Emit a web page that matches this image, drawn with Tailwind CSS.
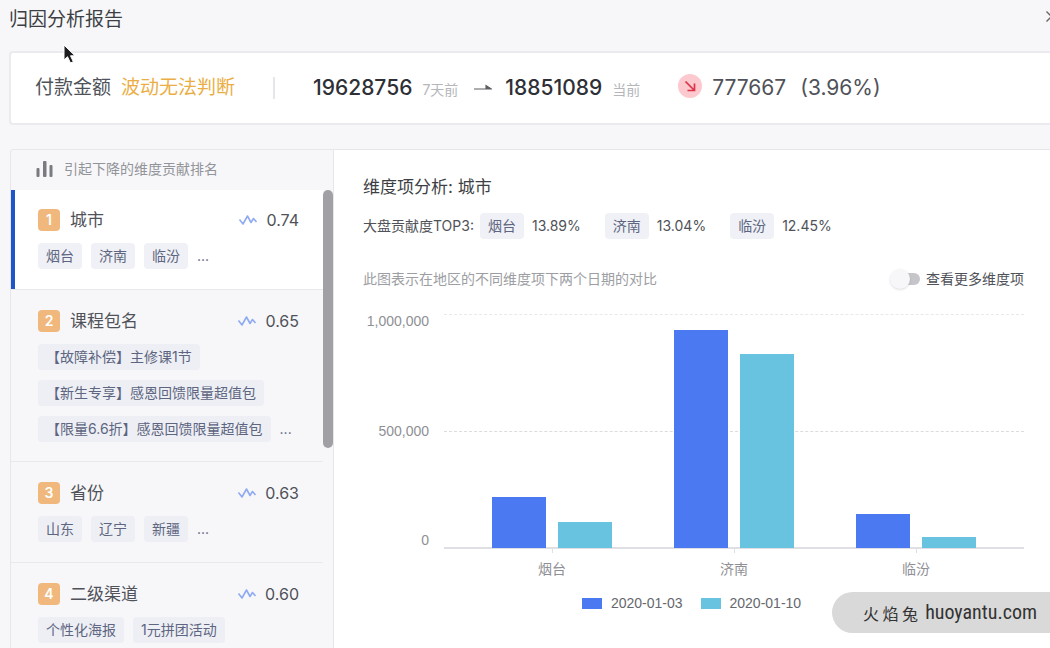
<!DOCTYPE html>
<html lang="zh-CN">
<head>
<meta charset="utf-8">
<meta name="viewport" content="width=device-width, initial-scale=1">
<title>归因分析报告</title>
<script src="https://cdn.jsdelivr.net/npm/@tailwindcss/browser@4"></script>
</head>
<body class="flex h-screen flex-col overflow-hidden bg-[#f7f7f9] font-['Inter','Noto_Sans_CJK_SC',sans-serif] text-sm text-[#4f5259]">

<svg class="hidden" aria-hidden="true">
  <symbol id="trend" viewBox="0 0 20 14"><path d="M1.500 6.500l3.500 4.500L9.500 3l3.500 6.500 2.500-4L18.500 9" fill="none" stroke="#8fabf3" stroke-width="1.600" stroke-linejoin="round"/></symbol>
</svg>

<header class="flex h-[51px] shrink-0 items-start justify-between pt-2 pl-[9px]">
  <h1 class="text-[19px] leading-6 text-[#3d3f44]">归因分析报告</h1>
  <button type="button" aria-label="关闭" class="-mr-2 mt-0.5">
    <svg class="size-[13px]" viewBox="0 0 13 13" fill="none" stroke="#666" stroke-width="1.400"><path d="M1.500 1.500l10 10M11.500 1.500l-10 10"/></svg>
  </button>
</header>

<section class="ml-[9px] flex h-[74px] shrink-0 items-center rounded-l border-y-2 border-l-2 border-[#ebebef] bg-white pl-6 text-[19px] whitespace-nowrap">
  <span>付款金额</span>
  <span class="ml-[10px] text-[#ebae45]">波动无法判断</span>
  <span class="ml-[38px] h-[22px] w-0.5 bg-[#e6e6ea]"></span>
  <span class="ml-[38px] text-[21px] font-medium text-[#2e3036]">19628756</span>
  <span class="mt-1 ml-[10px] text-sm text-[#b4b6ba]">7天前</span>
  <svg class="ml-4 h-2 w-[18px]" viewBox="0 0 18 8"><path d="M0 5h17.500L12 1.500V5" fill="#5c5e63" stroke="#5c5e63" stroke-width="1.100"/></svg>
  <span class="ml-[13px] text-[21px] font-medium text-[#2e3036]">18851089</span>
  <span class="mt-1 ml-[10px] text-sm text-[#b4b6ba]">当前</span>
  <svg class="ml-[38px] -mt-1 size-6" viewBox="0 0 24 24" fill="none"><circle cx="12" cy="12" r="12" fill="#fbc9ce"/><path d="M7.500 7.500l8.500 8.500M16.500 9.500V16.500h-7" stroke="#dc3348" stroke-width="1.700"/></svg>
  <span class="ml-[10px] text-[21px]">777667</span>
  <span class="ml-[14px] text-[21px]">(3.96%)</span>
</section>

<main class="mt-6 ml-[10px] flex min-h-0 flex-1 rounded-tl border-t border-l border-[#e6e7eb]">
  <aside class="flex w-[323px] shrink-0 flex-col border-r border-[#e6e7eb]">
    <h2 class="flex h-10 shrink-0 items-center gap-[10px] pb-[3px] pl-[25px] text-[#929499]">
      <svg class="size-[18px]" viewBox="0 0 18 18" fill="#797b80"><rect x="0.500" y="8" width="3" height="9" rx="1"/><rect x="7" y="1" width="3.500" height="16" rx="1"/><rect x="13.500" y="5" width="3" height="12" rx="1"/></svg>
      引起下降的维度贡献排名
    </h2>
    <div class="flex min-h-0 flex-1">
      <ol class="min-w-0 flex-1 overflow-hidden">
        <li class="border-b border-[#e8e9ed] bg-white">
          <div class="border-l-4 border-[#1f55c8] pt-[18px] pr-6 pb-5 pl-[23px]">
            <div class="flex h-6 items-center text-[17px]">
              <span class="flex size-[22px] items-center justify-center rounded-sm bg-[#f0b87d] text-sm font-semibold text-white">1</span>
              <h3 class="ml-[10px] flex-1">城市</h3>
              <svg class="h-[14px] w-5"><use href="#trend"/></svg>
              <span class="ml-2 text-base">0.74</span>
            </div>
            <div class="mt-[11px] flex gap-[9px] leading-[26px] text-[#5d6580]">
              <span class="rounded bg-[#f0f1f6] px-2">烟台</span><span class="rounded bg-[#f0f1f6] px-2">济南</span><span class="rounded bg-[#f0f1f6] px-2">临汾</span><span>...</span>
            </div>
          </div>
        </li>
        <li class="border-b border-[#e8e9ed]">
          <div class="border-l-4 border-transparent pt-[19px] pr-6 pb-[19px] pl-[23px]">
            <div class="flex h-6 items-center text-[17px]">
              <span class="flex size-[22px] items-center justify-center rounded-sm bg-[#f0b87d] text-sm font-semibold text-white">2</span>
              <h3 class="ml-[10px] flex-1">课程包名</h3>
              <svg class="h-[14px] w-5"><use href="#trend"/></svg>
              <span class="ml-2 text-base">0.65</span>
            </div>
            <div class="mt-[11px] flex flex-col items-start gap-[10px] leading-[26px] whitespace-nowrap text-[#5d6580]">
              <span class="rounded bg-[#edeff5] px-2">【故障补偿】主修课1节</span>
              <span class="rounded bg-[#edeff5] px-2">【新生专享】感恩回馈限量超值包</span>
              <div class="flex gap-[9px]"><span class="rounded bg-[#edeff5] px-2">【限量6.6折】感恩回馈限量超值包</span><span>...</span></div>
            </div>
          </div>
        </li>
        <li class="border-b border-[#e8e9ed]">
          <div class="border-l-4 border-transparent pt-[19px] pr-6 pb-5 pl-[23px]">
            <div class="flex h-6 items-center text-[17px]">
              <span class="flex size-[22px] items-center justify-center rounded-sm bg-[#f0b87d] text-sm font-semibold text-white">3</span>
              <h3 class="ml-[10px] flex-1">省份</h3>
              <svg class="h-[14px] w-5"><use href="#trend"/></svg>
              <span class="ml-2 text-base">0.63</span>
            </div>
            <div class="mt-[11px] flex gap-[9px] leading-[26px] text-[#5d6580]">
              <span class="rounded bg-[#edeff5] px-2">山东</span><span class="rounded bg-[#edeff5] px-2">辽宁</span><span class="rounded bg-[#edeff5] px-2">新疆</span><span>...</span>
            </div>
          </div>
        </li>
        <li>
          <div class="border-l-4 border-transparent pt-[19px] pr-6 pb-5 pl-[23px]">
            <div class="flex h-6 items-center text-[17px]">
              <span class="flex size-[22px] items-center justify-center rounded-sm bg-[#f0b87d] text-sm font-semibold text-white">4</span>
              <h3 class="ml-[10px] flex-1">二级渠道</h3>
              <svg class="h-[14px] w-5"><use href="#trend"/></svg>
              <span class="ml-2 text-base">0.60</span>
            </div>
            <div class="mt-[11px] flex gap-[9px] leading-[26px] text-[#5d6580]">
              <span class="rounded bg-[#edeff5] px-2">个性化海报</span><span class="rounded bg-[#edeff5] px-2">1元拼团活动</span>
            </div>
          </div>
        </li>
      </ol>
      <div class="h-[258px] w-[10px] rounded-full bg-[#a1a1a5]"></div>
    </div>
  </aside>

  <section class="min-w-0 flex-1 bg-white pt-[25px] pr-[26px] pl-[29px] whitespace-nowrap">
    <h2 class="text-[17px] leading-6 text-[#3d3f44]">维度项分析: 城市</h2>
    <div class="mt-[14px] flex leading-[26px]">
      <span>大盘贡献度TOP3:</span>
      <span class="ml-[6px] rounded bg-[#f0f1f6] px-2 text-[#5d6580]">烟台</span><span class="ml-2">13.89%</span>
      <span class="ml-6 rounded bg-[#f0f1f6] px-2 text-[#5d6580]">济南</span><span class="ml-2">13.04%</span>
      <span class="ml-6 rounded bg-[#f0f1f6] px-2 text-[#5d6580]">临汾</span><span class="ml-2">12.45%</span>
    </div>
    <div class="mt-7 flex h-6 items-center justify-between">
      <p class="text-[#9c9ea3]">此图表示在地区的不同维度项下两个日期的对比</p>
      <label class="flex items-center gap-[6px]">
        <input type="checkbox" class="flex h-3 w-7 appearance-none items-center rounded-full bg-[#c6c6ca] before:-ml-0.5 before:size-5 before:shrink-0 before:rounded-full before:bg-[#f7f7f9] before:shadow before:content-['']">
        查看更多维度项
      </label>
    </div>

    <figure class="mt-[23px] font-['Liberation_Sans','Noto_Sans_CJK_SC',sans-serif] text-[#8f9095]">
      <div class="flex gap-[15px]">
        <div class="flex h-[233px] w-[66px] flex-col justify-between text-right leading-[14px]">
          <span>1,000,000</span><span>500,000</span><span>0</span>
        </div>
        <div class="min-w-0 flex-1">
          <div class="grid h-[235px]">
            <div class="col-start-1 row-start-1 flex flex-col justify-between">
              <span class="border-t border-dashed border-[#e9e9ed]"></span>
              <span class="border-t border-dashed border-[#dcdce0]"></span>
              <span class="border-t-2 border-[#dfdfe5]"></span>
            </div>
            <div class="col-start-1 row-start-1 grid grid-cols-3 px-[17px] pb-px">
              <div class="flex items-end justify-center gap-3"><span class="w-[54px] bg-[#4b79f1]" style="height:22%"></span><span class="w-[54px] bg-[#67c3e0]" style="height:11%"></span></div>
              <div class="flex items-end justify-center gap-3"><span class="w-[54px] bg-[#4b79f1]" style="height:93%"></span><span class="w-[54px] bg-[#67c3e0]" style="height:83%"></span></div>
              <div class="flex items-end justify-center gap-3"><span class="w-[54px] bg-[#4b79f1]" style="height:14.5%"></span><span class="w-[54px] bg-[#67c3e0]" style="height:4.7%"></span></div>
            </div>
          </div>
          <div class="grid grid-cols-3 px-[17px] text-center leading-6">
            <div class="flex flex-col items-center gap-1"><span class="h-1 w-px bg-[#dfdfe5]"></span>烟台</div>
            <div class="flex flex-col items-center gap-1"><span class="h-1 w-px bg-[#dfdfe5]"></span>济南</div>
            <div class="flex flex-col items-center gap-1"><span class="h-1 w-px bg-[#dfdfe5]"></span>临汾</div>
          </div>
        </div>
      </div>
      <figcaption class="mt-[10px] flex justify-center gap-[18px] pr-1 leading-6 text-[#66686d]">
        <span class="flex items-center gap-[9px]"><span class="h-[11px] w-5 bg-[#4b79f1]"></span>2020-01-03</span>
        <span class="flex items-center gap-[9px]"><span class="h-[11px] w-5 bg-[#67c3e0]"></span>2020-01-10</span>
      </figcaption>
    </figure>
  </section>
</main>

<svg class="absolute top-[44px] left-[63px] h-5 w-[14px]" viewBox="0 0 14 20"><path d="M1 1v15l3.500-3.300L7.500 19l2.800-1.300L7.500 11.800H12z" fill="#1c1c1e" stroke="#fff" stroke-width="1"/></svg>
<div class="absolute right-0 bottom-[15px] flex h-[41px] items-center gap-[7px] rounded-l-full bg-[#d9d9d9] pr-[13px] pl-[31px] text-[#333]">
  <span class="font-['Noto_Sans_CJK_SC',sans-serif] text-base">火 焰 兔</span>
  <span class="pb-px font-['Roboto_Condensed','Liberation_Sans_Narrow',sans-serif] text-[20px]">huoyantu.com</span>
</div>
</body>
</html>
